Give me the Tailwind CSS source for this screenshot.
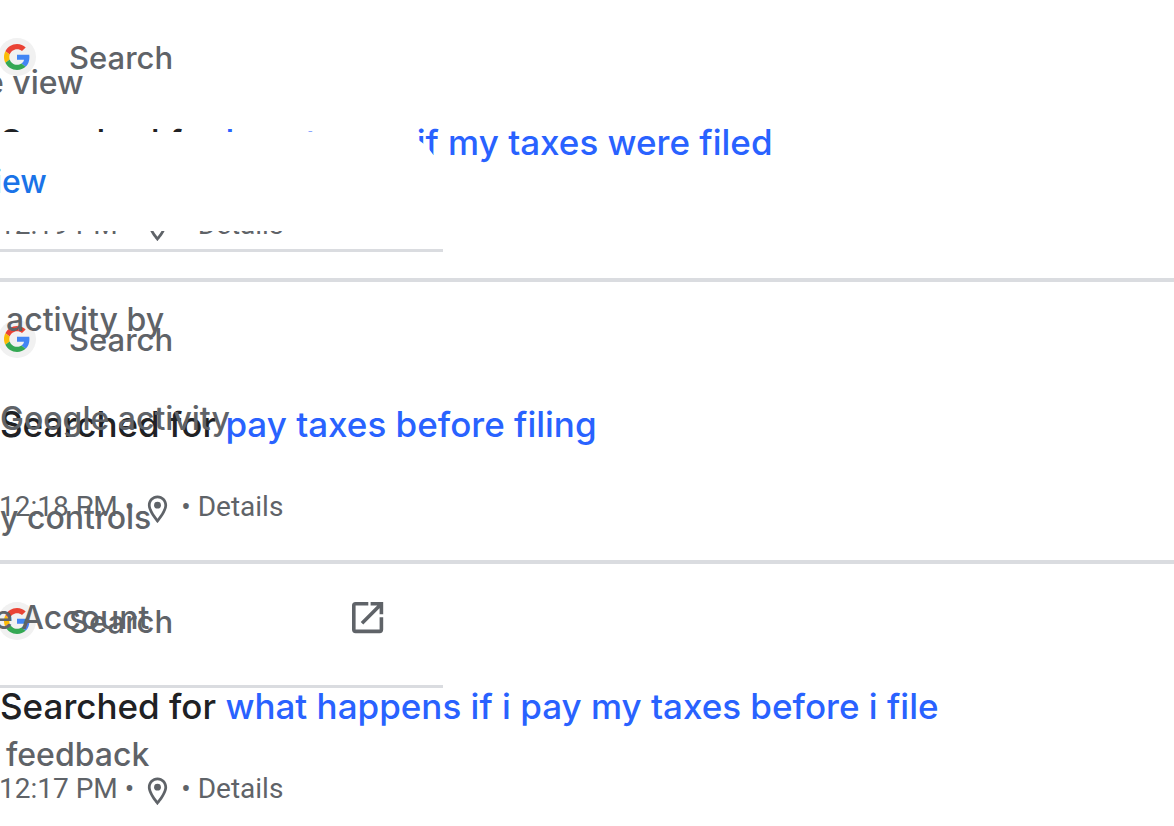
<!DOCTYPE html>
<html lang="en">
<head>
<meta charset="utf-8">
<title>My Activity</title>
<script src="https://cdn.jsdelivr.net/npm/@tailwindcss/browser@4"></script>
</head>
<body class="relative h-screen overflow-hidden bg-white font-['Inter',sans-serif] text-[#5f6368]">

<!-- Shared icons -->
<svg class="hidden" aria-hidden="true">
  <symbol id="google" viewBox="0 0 48 48">
    <path fill="#EA4335" d="M24 9.5c3.54 0 6.71 1.22 9.21 3.6l6.85-6.85C35.9 2.38 30.47 0 24 0 14.62 0 6.51 5.38 2.56 13.22l7.98 6.19C12.43 13.72 17.74 9.5 24 9.5z"/>
    <path fill="#4285F4" d="M46.98 24.55c0-1.57-.15-3.09-.38-4.55H24v9.02h12.94c-.58 2.96-2.26 5.48-4.78 7.18l7.73 6c4.51-4.18 7.09-10.36 7.09-17.65z"/>
    <path fill="#FBBC05" d="M10.53 28.59c-.48-1.45-.76-2.99-.76-4.59s.27-3.14.76-4.59l-7.98-6.19C.92 16.46 0 20.12 0 24s.92 7.54 2.56 10.78l7.97-6.19z"/>
    <path fill="#34A853" d="M24 48c6.48 0 11.93-2.13 15.89-5.81l-7.73-6c-2.15 1.45-4.92 2.3-8.16 2.3-6.26 0-11.57-4.22-13.47-9.91l-7.98 6.19C6.51 42.62 14.62 48 24 48z"/>
  </symbol>
  <symbol id="pin" viewBox="0 -1.3 24 24">
    <path d="M12 2C8.13 2 5 5.13 5 9c0 5.25 7 13 7 13s7-7.75 7-13c0-3.87-3.13-7-7-7zM7 9c0-2.76 2.24-5 5-5s5 2.24 5 5c0 2.88-2.88 7.19-5 9.88C9.92 16.21 7 11.85 7 9z"/>
    <circle cx="12" cy="9" r="2.5"/>
  </symbol>
</svg>

<main>
  <article class="border-b-4 border-[#dadce0] pt-[38px] pb-[33px]">
    <header class="flex h-[38px] items-center gap-[33px]">
      <span class="-ml-0.5 flex size-[38px] items-center justify-center rounded-full bg-[#f1f1f1]"><svg class="size-[26px]"><use href="#google"/></svg></span>
      <span class="pt-0.5 text-[31px] leading-9 font-medium">Search</span>
    </header>
    <h2 class="mt-[42px] text-[35px] leading-[48px] font-medium whitespace-nowrap text-[#202124]">Searched for <a href="#" class="text-[#2962ff]">how to see if my taxes were filed</a></h2>
    <div class="mt-[39px] -ml-px flex h-10 items-center gap-[7px] font-['Roboto',sans-serif] text-[28px] leading-10"><span>12:19 PM</span><span>•</span><svg class="size-[33px] fill-current overflow-visible"><use href="#pin"/></svg><span>•</span><a href="#">Details</a></div>
  </article>

  <article class="border-b-4 border-[#dadce0] pt-[38px] pb-[33px]">
    <header class="flex h-[38px] items-center gap-[33px]">
      <span class="-ml-0.5 flex size-[38px] items-center justify-center rounded-full bg-[#f1f1f1]"><svg class="size-[26px]"><use href="#google"/></svg></span>
      <span class="pt-0.5 text-[31px] leading-9 font-medium">Search</span>
    </header>
    <h2 class="mt-[42px] text-[35px] leading-[48px] font-medium whitespace-nowrap text-[#202124]">Searched for <a href="#" class="text-[#2962ff]">pay taxes before filing</a></h2>
    <div class="mt-[39px] -ml-px flex h-10 items-center gap-[7px] font-['Roboto',sans-serif] text-[28px] leading-10"><span>12:18 PM</span><span>•</span><svg class="size-[33px] fill-current overflow-visible"><use href="#pin"/></svg><span>•</span><a href="#">Details</a></div>
  </article>

  <article class="pt-[38px] pb-[33px]">
    <header class="flex h-[38px] items-center gap-[33px]">
      <span class="-ml-0.5 flex size-[38px] items-center justify-center rounded-full bg-[#f1f1f1]"><svg class="size-[26px]"><use href="#google"/></svg></span>
      <span class="pt-0.5 text-[31px] leading-9 font-medium">Search</span>
    </header>
    <h2 class="mt-[42px] text-[35px] leading-[48px] font-medium whitespace-nowrap text-[#202124]">Searched for <a href="#" class="text-[#2962ff]">what happens if i pay my taxes before i file</a></h2>
    <div class="mt-[39px] -ml-px flex h-10 items-center gap-[7px] font-['Roboto',sans-serif] text-[28px] leading-10"><span>12:17 PM</span><span>•</span><svg class="size-[33px] fill-current overflow-visible"><use href="#pin"/></svg><span>•</span><a href="#">Details</a></div>
  </article>
</main>

<!-- Navigation drawer, lying over the activity list and partly off its left edge -->
<nav class="absolute top-0 -left-4 w-[459px] pt-[33px] text-[32px] leading-10 font-medium whitespace-nowrap">
  <a href="#" class="flex h-[99px] items-center pl-px">e view</a>
  <a href="#" class="mr-0.5 flex h-[99px] items-center rounded-r-full bg-white pl-2.5 text-[#1a73e8]">iew</a>
  <hr class="mt-[18px] mb-[18px] border-t-3 border-[#dadce0]">
  <a href="#" class="flex h-[99px] items-center pl-[22px]">activity by</a>
  <a href="#" class="flex h-[99px] items-center pl-4">Google activity</a>
  <a href="#" class="flex h-[99px] items-center pl-4">y controls</a>
  <a href="#" class="flex h-[101px] items-center justify-between pr-[59px] pl-2.5">e Account
    <svg class="size-8" viewBox="0 0 32 32" fill="none" stroke="currentColor" stroke-width="3.6"><path d="M16.3 1.8H3.6Q1.8 1.8 1.8 3.6V27.6Q1.8 29.4 3.6 29.4H27.6Q29.4 29.4 29.4 27.6V15.2M18.6 1.8H29.4V12.3M10 21.2L29 2.2"/></svg>
  </a>
  <hr class="mt-[17px] mb-[17px] border-t-3 border-[#dadce0]">
  <a href="#" class="flex h-[99px] items-center pl-[22px]">feedback</a>
</nav>
</body>
</html>
